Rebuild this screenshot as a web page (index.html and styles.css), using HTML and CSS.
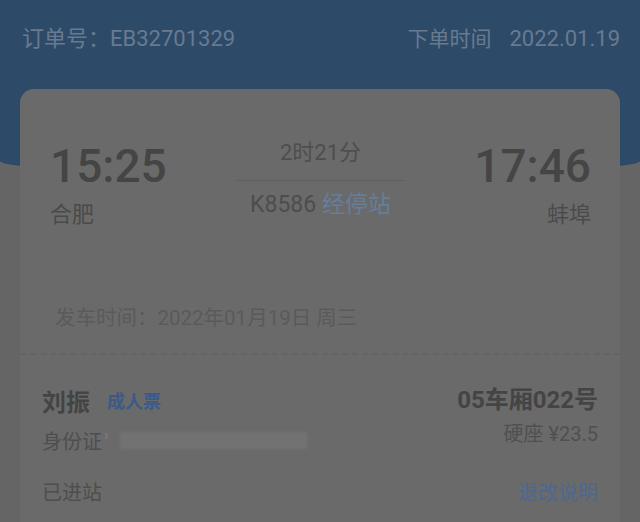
FILE: index.html
```html
<!DOCTYPE html>
<html lang="zh">
<head>
<meta charset="utf-8">
<link rel="stylesheet" href="styles.css">
</head>
<body>
<div class="page">
  <div class="hero">
    <div class="order-row">
      <span class="order-no">订单号：EB32701329</span>
      <span class="order-time"><span class="ot-label">下单时间</span><span class="ot-date">2022.01.19</span></span>
    </div>
  </div>
  <div class="card">
    <div class="trip">
      <div class="end end-left">
        <div class="time">15:25</div>
        <div class="station">合肥</div>
      </div>
      <div class="mid">
        <div class="duration">2时21分</div>
        <div class="mid-line"></div>
        <div class="train">K8586 <span class="stops">经停站</span></div>
      </div>
      <div class="end end-right">
        <div class="time">17:46</div>
        <div class="station">蚌埠</div>
      </div>
    </div>
    <div class="depart">发车时间：2022年01月19日 周三</div>
    <div class="divider"></div>
    <div class="passenger">
      <div class="p-top">
        <div class="p-left">
          <div class="name-row"><span class="name">刘振</span><span class="badge">成人票</span></div>
          <div class="id-row"><span class="id-label">身份证</span><span class="id-tick"></span><span class="id-blur"></span></div>
        </div>
        <div class="p-right">
          <div class="seat">05车厢022号</div>
          <div class="price">硬座 ¥23.5</div>
        </div>
      </div>
      <div class="p-bottom">
        <span class="status">已进站</span>
        <span class="rules">退改说明</span>
      </div>
    </div>
  </div>
</div>
</body>
</html>
```
FILE: styles.css
```css
* { box-sizing: border-box; margin: 0; padding: 0; }
html, body { width: 640px; height: 522px; overflow: hidden; }
body {
  background: #656565;
  font-family: Roboto, "Noto Sans CJK SC", sans-serif;
  color: #474747;
}
.page { position: relative; }
.hero {
  height: 175px;
  background: #2e4a69;
  border-radius: 0 0 50% 50% / 0 0 14px 14px;
  padding: 25px 20px 0 22px;
}
.order-row {
  display: flex;
  justify-content: space-between;
  align-items: center;
  height: 28px;
  color: #687a8f;
  font-size: 22px;
  line-height: 28px;
}
.order-time { display: flex; gap: 18px; }
.ot-label { font-size: 21px; }
.card {
  margin: -86px 20px 0;
  background: #6a6a6a;
  border-radius: 14px 14px 0 0;
  height: 460px;
}
.trip {
  display: grid;
  grid-template-columns: 1fr 167px 1fr;
  padding: 50px 29px 0 30px;
}
.end { padding-top: 4px; }
.end-right { text-align: right; }
.time {
  font-size: 46px;
  line-height: 46px;
  font-weight: 500;
  color: #454545;
}
.station {
  margin-top: 12px;
  font-size: 22px;
  line-height: 28px;
  color: #4a4a4a;
}
.mid { text-align: center; }
.duration {
  font-size: 22px;
  line-height: 28px;
  color: #4e4e4e;
}
.mid-line {
  margin-top: 13px;
  height: 1px;
  background: #5e5e5e;
}
.train {
  margin-top: 10px;
  font-size: 23px;
  line-height: 28px;
  color: #4d4d4d;
}
.stops { color: #657e9d; }
.depart {
  margin: 75px 0 0 35px;
  font-size: 20.5px;
  line-height: 28px;
  color: #5a5a5a;
}
.divider {
  margin-top: 21px;
  height: 0;
  border-top: 2px dashed #646464;
}
.passenger { padding: 29px 22px 0 22px; }
.p-top { display: flex; justify-content: space-between; }
.name-row { display: flex; align-items: center; gap: 17px; height: 32px; }
.name { font-size: 24px; font-weight: 700; color: #444; }
.badge { font-size: 18px; font-weight: 700; color: #3b5a88; }
.id-row { display: flex; align-items: center; margin-top: 9px; height: 30px; }
.id-label { font-size: 20px; color: #4e4e4e; }
.id-tick { width: 3px; height: 6px; background: #747474; margin: 0 12px 8px 3px; }
.id-blur {
  width: 187px;
  height: 17px;
  background: #727272;
  filter: blur(1.5px);
}
.p-right { text-align: right; }
.seat {
  font-size: 24px;
  line-height: 32px;
  font-weight: 700;
  color: #444;
}
.price {
  margin-top: 4px;
  font-size: 20px;
  line-height: 28px;
  color: #505050;
}
.p-bottom {
  display: flex;
  justify-content: space-between;
  margin-top: 24px;
  font-size: 20px;
  line-height: 28px;
}
.status { color: #4e4e4e; }
.rules { color: #4d6890; }
```
